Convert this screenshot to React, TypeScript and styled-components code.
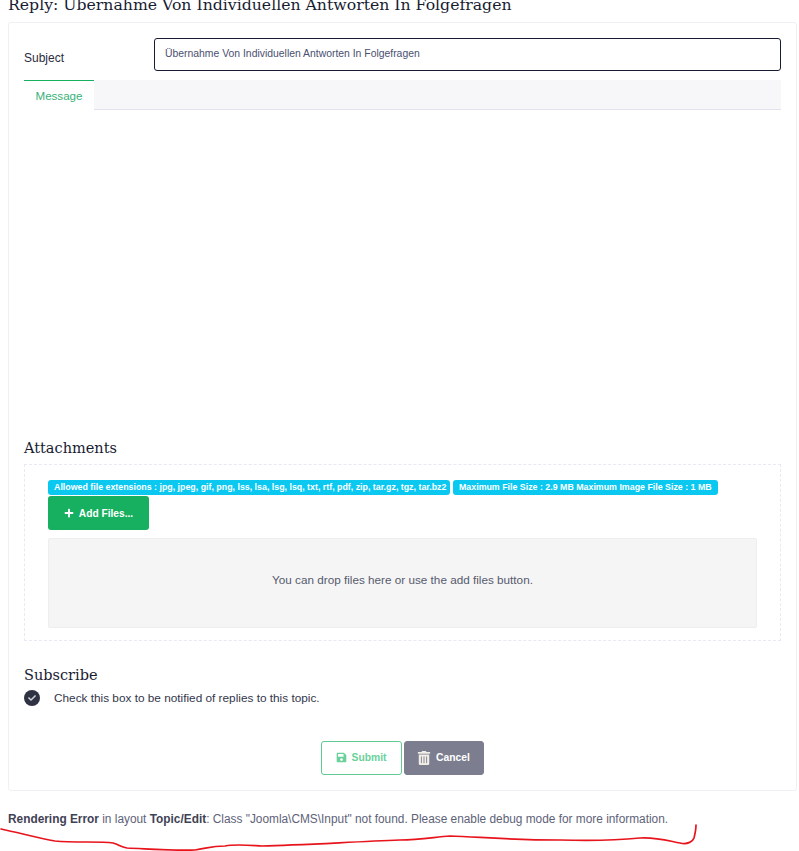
import React from "react";
import styled, { createGlobalStyle } from "styled-components";
import { FaPlus, FaSave, FaTrashAlt, FaCheck } from "react-icons/fa";

const Global = createGlobalStyle`
  html, body { margin: 0; padding: 0; background: #fff; overflow: hidden; }
  body { font-family: "Liberation Sans", Arial, sans-serif; color: #3f4254; }
`;

const Page = styled.div`
  position: relative;
  width: 799px;
  height: 851px;
  overflow: hidden;
  padding: 0 2px 0 8px;
  box-sizing: border-box;
`;

const Title = styled.h1`
  margin: -6px 0 0;
  height: 28px;
  font-family: "DejaVu Serif", serif;
  font-size: 15.7px;
  line-height: 22px;
  font-weight: 400;
  color: #181c32;
  white-space: nowrap;
`;

const Card = styled.form`
  box-sizing: border-box;
  height: 769px;
  border: 1px solid #eff0f6;
  border-radius: 3px;
  padding: 15px;
  display: flex;
  flex-direction: column;
`;

const SubjectRow = styled.div`
  display: flex;
  align-items: center;
  height: 33px;
`;

const Label = styled.label`
  width: 130px;
  font-size: 12px;
  padding-top: 6px;
  color: #2b2b40;
`;

const Input = styled.div`
  flex: 1;
  box-sizing: border-box;
  height: 33px;
  border: 1px solid #181c32;
  border-radius: 3px;
  padding: 0 10px 3px;
  display: flex;
  align-items: center;
  font-size: 10.4px;
  color: #4a5070;
`;

const TabBar = styled.div`
  box-sizing: border-box;
  margin-top: 9px;
  height: 30px;
  background: #f7f7fa;
  border-bottom: 1px solid #e2e3ee;
  display: flex;
`;

const Tab = styled.div`
  box-sizing: border-box;
  width: 70px;
  height: 30px;
  background: #fff;
  border-top: 1px solid #16b060;
  display: flex;
  align-items: center;
  justify-content: center;
  font-size: 11.6px;
  color: #38b27a;
`;

const Editor = styled.div`
  height: 327px;
`;

const Heading = styled.h3`
  margin: 0;
  font-family: "DejaVu Serif", serif;
  font-size: 14.5px;
  line-height: 22px;
  font-weight: 400;
  color: #181c32;
`;

const DropZone = styled.div`
  box-sizing: border-box;
  height: 177px;
  margin-top: 5px;
  border: 1px dashed #e8e9f2;
  padding: 15px 23px 12px;
`;

const Badges = styled.div`
  display: flex;
  gap: 3px;
  height: 16px;
`;

const Badge = styled.span<{ $w: number }>`
  box-sizing: border-box;
  width: ${(p) => p.$w}px;
  height: 15px;
  background: #0bc8f1;
  border-radius: 3px;
  color: #fff;
  font-size: 8.83px;
  font-weight: 700;
  line-height: 14px;
  padding-left: 6px;
  white-space: nowrap;
`;

const AddButton = styled.button`
  box-sizing: border-box;
  display: flex;
  align-items: center;
  justify-content: center;
  gap: 5px;
  width: 101px;
  height: 34px;
  border: none;
  border-radius: 3px;
  background: #17b060;
  color: #fff;
  font: 700 10.2px "Liberation Sans", Arial, sans-serif;
`;

const DropArea = styled.div`
  box-sizing: border-box;
  margin-top: 8px;
  height: 90px;
  background: #f5f5f5;
  border: 1px solid #eee;
  border-radius: 2px;
  display: flex;
  align-items: center;
  justify-content: center;
  padding-bottom: 7px;
  font-size: 11.72px;
  color: #555a6e;
`;

const SubscribeBlock = styled.div`
  margin-top: 23px;
`;

const CheckRow = styled.div`
  display: flex;
  align-items: center;
  gap: 14px;
  margin-top: 4px;
  font-size: 11.8px;
  color: #33364a;
`;

const CheckDot = styled.span`
  width: 16px;
  height: 16px;
  border-radius: 50%;
  background: #2f3242;
  color: #cfd1da;
  display: flex;
  align-items: center;
  justify-content: center;
  font-size: 8px;
`;

const Actions = styled.div`
  margin-top: 35px;
  display: flex;
  justify-content: center;
  gap: 2px;
  padding-right: 1px;
`;

const ActionButton = styled.button<{ $kind: "submit" | "cancel" }>`
  box-sizing: border-box;
  display: flex;
  align-items: center;
  justify-content: center;
  gap: 5px;
  height: 34px;
  padding-bottom: 2px;
  width: ${(p) => (p.$kind === "submit" ? 81 : 80)}px;
  border-radius: 3px;
  border: 1px solid ${(p) => (p.$kind === "submit" ? "#5fcb92" : "#7c7e90")};
  background: ${(p) => (p.$kind === "submit" ? "#fff" : "#7c7e90")};
  color: ${(p) => (p.$kind === "submit" ? "#6ad19b" : "#fff")};
  font: 700 10.3px "Liberation Sans", Arial, sans-serif;
`;

const CancelIcon = styled(FaTrashAlt)`
  color: #f0ece6;
`;

const ErrorLine = styled.p`
  margin: 20px 0 0;
  font-size: 11.87px;
  line-height: 16px;
  color: #5e6278;
  white-space: nowrap;
  strong { color: #3f4254; font-weight: 700; }
`;

const Scribble = styled.svg`
  position: absolute;
  left: 0;
  top: 0;
  pointer-events: none;
`;

export default function App() {
  return (
    <>
      <Global />
      <Page>
        <Title>Reply: Übernahme Von Individuellen Antworten In Folgefragen</Title>
        <Card>
          <SubjectRow>
            <Label>Subject</Label>
            <Input>Übernahme Von Individuellen Antworten In Folgefragen</Input>
          </SubjectRow>
          <TabBar>
            <Tab>Message</Tab>
          </TabBar>
          <Editor />
          <Heading>Attachments</Heading>
          <DropZone>
            <Badges>
              <Badge $w={402}>Allowed file extensions : jpg, jpeg, gif, png, lss, lsa, lsg, lsq, txt, rtf, pdf, zip, tar.gz, tgz, tar.bz2</Badge>
              <Badge $w={265}>Maximum File Size : 2.9 MB Maximum Image File Size : 1 MB</Badge>
            </Badges>
            <AddButton type="button"><FaPlus size={10} /> Add Files...</AddButton>
            <DropArea>You can drop files here or use the add files button.</DropArea>
          </DropZone>
          <SubscribeBlock>
            <Heading>Subscribe</Heading>
            <CheckRow>
              <CheckDot><FaCheck /></CheckDot>
              Check this box to be notified of replies to this topic.
            </CheckRow>
          </SubscribeBlock>
          <Actions>
            <ActionButton type="button" $kind="submit"><FaSave size={11} /> Submit</ActionButton>
            <ActionButton type="button" $kind="cancel"><CancelIcon size={14} /> Cancel</ActionButton>
          </Actions>
        </Card>
        <ErrorLine>
          <strong>Rendering Error</strong> in layout <strong>Topic/Edit</strong>: Class "Joomla\CMS\Input" not found. Please enable debug mode for more information.
        </ErrorLine>
        <Scribble width="799" height="851" viewBox="0 0 799 851" fill="none">
          <path
            d="M1 829 C20 833 38 838 55 841 C75 843 100 841 113 843 C120 845 120 847 127 848 C150 849 175 851 195 850 C208 848 212 846 225 846 C235 844 245 845 262 846 C300 845 350 842 400 840 C420 840 435 837 450 836 C480 837 510 840 560 840 C590 841 620 840 640 838 C655 837 665 840 680 843 C688 845 693 841 694 838 C695 834 696 830 696 825"
            stroke="#e8141c"
            strokeWidth="1.7"
            strokeLinecap="round"
          />
        </Scribble>
      </Page>
    </>
  );
}
